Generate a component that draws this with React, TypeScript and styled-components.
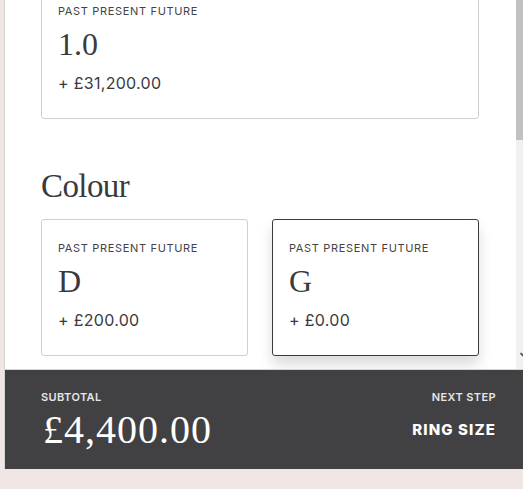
import React from 'react';
import styled, { createGlobalStyle } from 'styled-components';

const GlobalStyle = createGlobalStyle`
  html, body {
    margin: 0;
    padding: 0;
    background: #f0e7e5;
    overflow: hidden;
  }
  body {
    font-family: Inter, 'Liberation Sans', sans-serif;
    color: #3d3d3f;
  }
`;

const Page = styled.div`
  padding-left: 4px;
  height: 489px;
`;

const Panel = styled.div`
  width: 526px;
  border-left: 1px solid #d3d3d3;
  background: #fff;
  display: flex;
  flex-direction: column;
`;

const ScrollArea = styled.div`
  height: 369px;
  display: flex;
  border-bottom: 1px solid #d6d6d6;
`;

const Content = styled.div`
  flex: 1;
  overflow: hidden;
  padding: 0 37px 0 36px;
`;

const Inner = styled.div`
  margin-top: -18px;
`;

const ScrollBar = styled.div`
  width: 15px;
  background: #f1f1f1;
  display: flex;
  flex-direction: column;
`;

const Thumb = styled.div`
  height: 140px;
  background: #c1c1c1;
`;

const ArrowSlot = styled.div`
  margin-top: auto;
  height: 17px;
  display: flex;
  align-items: flex-start;
  justify-content: center;
`;

const Card = styled.div<{ selected?: boolean }>`
  border: 1px solid ${({ selected }) => (selected ? '#3b3b3d' : '#d0d0d0')};
  border-radius: 3px;
  padding: 21px 16px 25px;
  background: #fff;
  box-shadow: ${({ selected }) => (selected ? '0 9px 14px rgba(0, 0, 0, 0.14)' : 'none')};
`;

const Label = styled.div`
  font-size: 11px;
  line-height: 14px;
  letter-spacing: 0.06em;
  text-transform: uppercase;
  color: #444446;
`;

const Value = styled.div`
  font-family: 'Liberation Serif', serif;
  font-size: 32px;
  line-height: 36px;
  margin-top: 8px;
  color: #3a3a3c;
`;

const Price = styled.div`
  font-size: 16px;
  line-height: 20px;
  margin-top: 11px;
  letter-spacing: 0.3px;
  color: #3a3a3c;
`;

const Heading = styled.h2`
  font-family: 'Liberation Serif', serif;
  font-weight: 400;
  font-size: 33px;
  line-height: 40px;
  letter-spacing: -0.6px;
  margin: 47px 0 13px;
  color: #3a3a3c;
`;

const Grid = styled.div`
  display: grid;
  grid-template-columns: 1fr 1fr;
  gap: 24px;
`;

const Footer = styled.div`
  height: 99px;
  box-sizing: border-box;
  background: #414143;
  padding: 20px 35px 0 36px;
  display: flex;
  justify-content: space-between;
  color: #fff;
`;

const FooterCol = styled.div<{ right?: boolean }>`
  display: flex;
  flex-direction: column;
  align-items: ${({ right }) => (right ? 'flex-end' : 'flex-start')};
`;

const FooterLabel = styled.div`
  font-size: 11px;
  line-height: 14px;
  font-weight: 600;
  letter-spacing: 0.4px;
  color: #e6e6e6;
`;

const Total = styled.div`
  font-family: 'Liberation Serif', serif;
  font-size: 40px;
  line-height: 44px;
  letter-spacing: 1px;
  margin-top: 4px;
  margin-left: 2px;
`;

const NextStep = styled.div`
  font-size: 15px;
  line-height: 18px;
  font-weight: 800;
  letter-spacing: 1.1px;
  margin-top: 17px;
`;

const options = [
  { label: 'Past Present Future', value: 'D', price: '+ £200.00' },
  { label: 'Past Present Future', value: 'G', price: '+ £0.00', selected: true },
];

export default function App() {
  return (
    <Page>
      <GlobalStyle />
      <Panel>
        <ScrollArea>
          <Content>
            <Inner>
              <Card>
                <Label>Past Present Future</Label>
                <Value>1.0</Value>
                <Price>+ £31,200.00</Price>
              </Card>
              <Heading>Colour</Heading>
              <Grid>
                {options.map((o) => (
                  <Card key={o.value} selected={o.selected}>
                    <Label>{o.label}</Label>
                    <Value>{o.value}</Value>
                    <Price>{o.price}</Price>
                  </Card>
                ))}
              </Grid>
            </Inner>
          </Content>
          <ScrollBar>
            <Thumb />
            <ArrowSlot>
              <svg width="8" height="6" viewBox="0 0 8 6">
                <path d="M0.5 1 L4 4.5 L7.5 1" fill="none" stroke="#505050" strokeWidth="1.6" />
              </svg>
            </ArrowSlot>
          </ScrollBar>
        </ScrollArea>
        <Footer>
          <FooterCol>
            <FooterLabel>SUBTOTAL</FooterLabel>
            <Total>£4,400.00</Total>
          </FooterCol>
          <FooterCol right>
            <FooterLabel>NEXT STEP</FooterLabel>
            <NextStep>RING SIZE</NextStep>
          </FooterCol>
        </Footer>
      </Panel>
    </Page>
  );
}
